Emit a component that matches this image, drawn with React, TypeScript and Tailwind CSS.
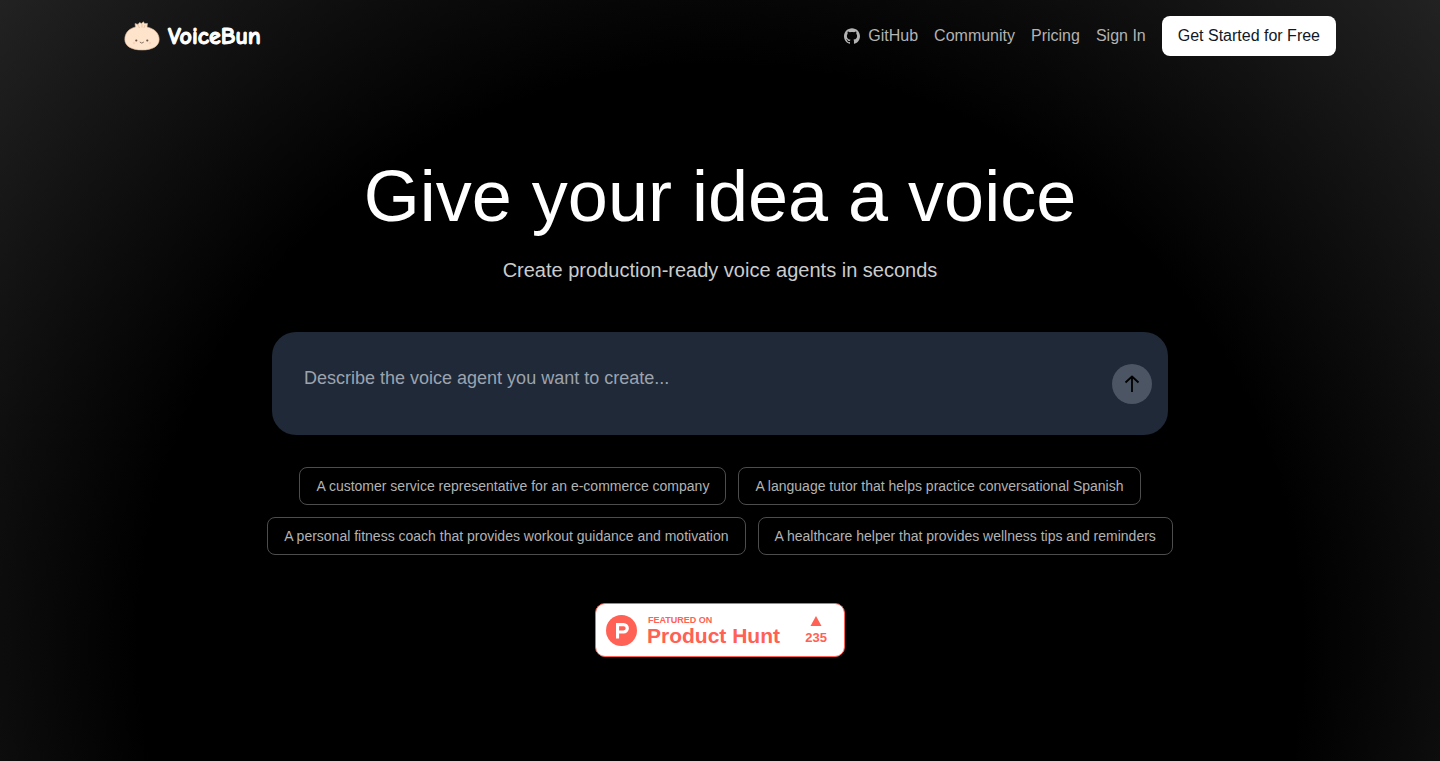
import React, { FormEvent, useState } from "react";
import { SiGithub } from "react-icons/si";

const suggestions = [
  "A customer service representative for an e-commerce company",
  "A language tutor that helps practice conversational Spanish",
  "A personal fitness coach that provides workout guidance and motivation",
  "A healthcare helper that provides wellness tips and reminders",
];

const links = ["Community", "Pricing", "Sign In"];

const BunIcon: React.FC = () => (
  <svg viewBox="0 0 36 30" className="w-9 h-[30px]" aria-hidden="true">
    <path
      d="M11.5 6 L11 2.6 L14 3.4 L15.5 1.6 L17.5 2.4 L19.5 .8 L20.5 2.6 L23.5 2.4 L23 6 C30 7.4 35.2 12 35.2 18.4 C35.2 25.4 28 29 18 29 C8 29 .8 25.4 .8 18.4 C.8 12 5 7.4 11.5 6Z"
      fill="#fde4cb"
      stroke="#dcb593"
      strokeWidth=".6"
    />
    <path d="M14 4 L15.5 7 M18 3 V6.5 M21 4 L20 7" stroke="#d8b08c" strokeWidth=".6" fill="none" />
    <circle cx="12.3" cy="19.5" r="1.1" fill="#6b5347" />
    <circle cx="23.3" cy="19.5" r="1.1" fill="#6b5347" />
    <path d="M15.8 21 Q17.8 23.3 19.8 21" stroke="#6b5347" strokeWidth=".8" fill="none" />
    <circle cx="10" cy="22" r="1.2" fill="#fbd3bd" />
    <circle cx="25.8" cy="22" r="1.2" fill="#fbd3bd" />
  </svg>
);

const ArrowUpIcon: React.FC = () => (
  <svg viewBox="0 0 24 24" className="size-6" fill="none" stroke="currentColor" aria-hidden="true">
    <path d="M12 20V4.5M5.5 10.5 12 4.5l6.5 6" strokeWidth="1.8" strokeLinejoin="round" />
  </svg>
);

const Header: React.FC = () => (
  <header className="flex items-center justify-between w-full max-w-[1232px] mx-auto pl-5 py-4">
    <a href="#" className="flex items-center gap-2">
      <BunIcon />
      <span className="font-['Comic_Neue','Comic_Sans_MS','Lato',sans-serif] text-2xl leading-6 font-black text-white [-webkit-text-stroke:1px_white]">
        VoiceBun
      </span>
    </a>
    <nav className="flex items-center gap-4 text-[#b3b3b3]">
      <a href="#" className="flex items-center gap-2">
        <SiGithub className="size-4" />
        GitHub
      </a>
      {links.map((link) => (
        <a key={link} href="#">
          {link}
        </a>
      ))}
      <button type="button" className="px-4 py-2 bg-white rounded-lg text-[#111827]">
        Get Started for Free
      </button>
    </nav>
  </header>
);

const ProductHuntBadge: React.FC = () => (
  <a
    href="#"
    className="flex items-center w-[250px] h-[54px] pl-2.5 pr-[17px] bg-white border border-[#ff6154] rounded-[10px] text-[#ff6154] font-bold"
  >
    <svg viewBox="0 0 31 31" className="size-[31px]" aria-hidden="true">
      <circle cx="15.5" cy="15.5" r="15.5" fill="#ff6154" />
      <path
        fillRule="evenodd"
        d="M10 8 H17.6 A5 5 0 0 1 17.6 18.6 H13.1 V23.5 H10Z M13.1 11.2 V15.4 H17.6 A2.1 2.1 0 0 0 17.6 11.2Z"
        fill="#fff"
      />
    </svg>
    <span className="flex flex-col ml-2.5">
      <span className="pl-px text-[9px] leading-3">FEATURED ON</span>
      <span className="text-[21px] leading-5">Product Hunt</span>
    </span>
    <span className="flex flex-col items-center gap-1 ml-auto pt-px">
      <svg viewBox="0 0 12 10" className="w-3 h-2.5" aria-hidden="true">
        <path d="M6 0 L11.5 10 H.5Z" fill="#ff6154" />
      </svg>
      <span className="text-[13px] leading-4">235</span>
    </span>
  </a>
);

const App: React.FC = () => {
  const [prompt, setPrompt] = useState("");

  const handleSubmit = (event: FormEvent) => {
    event.preventDefault();
  };

  return (
    <div className="min-h-screen bg-black bg-[radial-gradient(circle_at_50%_85%,#000_60%,#222_100%)] font-['Liberation_Sans',Arial,sans-serif] text-base">
      <Header />
      <main className="flex flex-col items-center px-4 pt-[88px] pb-12">
        <h1 className="text-7xl text-white text-center">Give your idea a voice</h1>
        <p className="mt-6 text-xl text-[#cccccc] text-center">
          Create production-ready voice agents in seconds
        </p>

        <form
          onSubmit={handleSubmit}
          className="flex items-start w-full max-w-4xl mt-12 pl-8 pr-4 pt-8 pb-[31px] bg-[#1f2937] rounded-3xl"
        >
          <textarea
            aria-label="Describe the voice agent you want to create"
            placeholder="Describe the voice agent you want to create..."
            className="flex-1 h-10 bg-transparent text-lg text-white placeholder:text-[#9ca3af] resize-none outline-none"
            value={prompt}
            onChange={(e) => setPrompt(e.target.value)}
          />
          <button
            type="submit"
            aria-label="Create agent"
            className="flex items-center justify-center size-10 rounded-full bg-[#4b5563] text-black"
          >
            <ArrowUpIcon />
          </button>
        </form>

        <div className="flex flex-wrap justify-center gap-3 w-full max-w-5xl mt-8">
          {suggestions.map((suggestion) => (
            <button
              key={suggestion}
              type="button"
              className="px-4 py-2 border border-[#4d4d4d] rounded-lg text-sm text-[#b3b3b3]"
              onClick={() => setPrompt(suggestion)}
            >
              {suggestion}
            </button>
          ))}
        </div>

        <div className="mt-12">
          <ProductHuntBadge />
        </div>
      </main>
    </div>
  );
};

export default App;
